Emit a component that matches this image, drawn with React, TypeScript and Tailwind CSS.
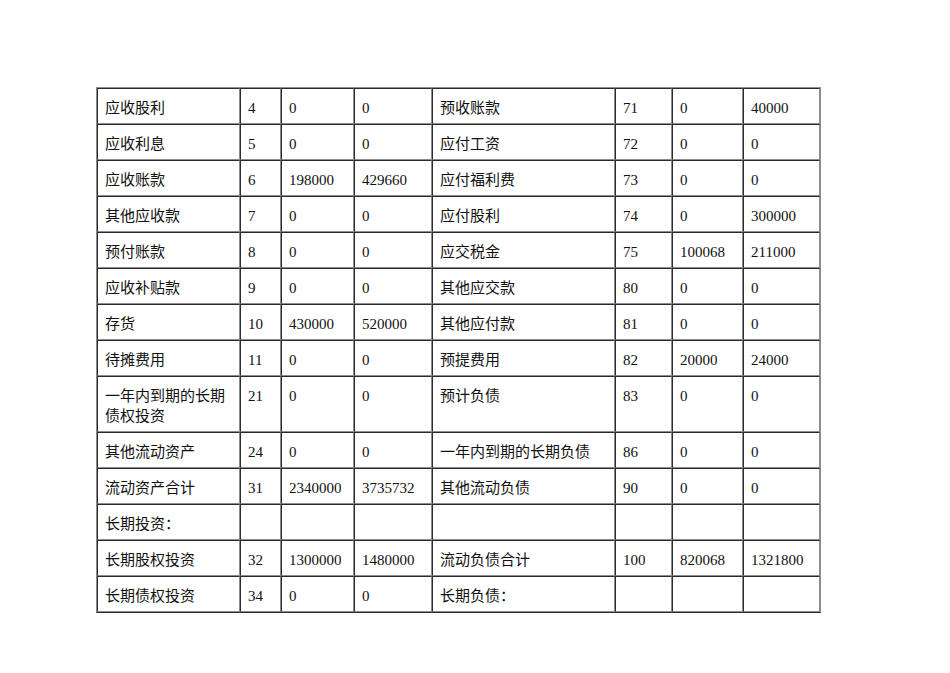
import React from 'react';

type Row = [string, string, string, string, string, string, string, string];

const rows: Row[] = [
  ['应收股利', '4', '0', '0', '预收账款', '71', '0', '40000'],
  ['应收利息', '5', '0', '0', '应付工资', '72', '0', '0'],
  ['应收账款', '6', '198000', '429660', '应付福利费', '73', '0', '0'],
  ['其他应收款', '7', '0', '0', '应付股利', '74', '0', '300000'],
  ['预付账款', '8', '0', '0', '应交税金', '75', '100068', '211000'],
  ['应收补贴款', '9', '0', '0', '其他应交款', '80', '0', '0'],
  ['存货', '10', '430000', '520000', '其他应付款', '81', '0', '0'],
  ['待摊费用', '11', '0', '0', '预提费用', '82', '20000', '24000'],
  ['一年内到期的长期债权投资', '21', '0', '0', '预计负债', '83', '0', '0'],
  ['其他流动资产', '24', '0', '0', '一年内到期的长期负债', '86', '0', '0'],
  ['流动资产合计', '31', '2340000', '3735732', '其他流动负债', '90', '0', '0'],
  ['长期投资：', '', '', '', '', '', '', ''],
  ['长期股权投资', '32', '1300000', '1480000', '流动负债合计', '100', '820068', '1321800'],
  ['长期债权投资', '34', '0', '0', '长期负债：', '', '', ''],
];

const Cell: React.FC<{ text: string }> = ({ text }) => (
  <div className="border-l border-t border-l-[#2b2b2b] border-t-[#2b2b2b] border-r border-b border-r-[#8c8c8c] border-b-[#8c8c8c] px-[7px] pt-[9px] pb-[5px] leading-[20px] text-[15px] text-[#111] break-all">
    {text}
  </div>
);

export default function App() {
  return (
    <div
      className="min-h-screen bg-white pt-[87px] pl-[96px]"
      style={{ fontFamily: '"Liberation Serif", "Noto Sans CJK SC", serif' }}
    >
      <div className="inline-grid grid-cols-[143px_41px_73px_78px_183px_57px_71px_77px] border border-[#8c8c8c] border-b-[#2b2b2b]">
        {rows.map((row, i) =>
          row.map((text, j) => <Cell key={`${i}-${j}`} text={text} />)
        )}
      </div>
    </div>
  );
}
